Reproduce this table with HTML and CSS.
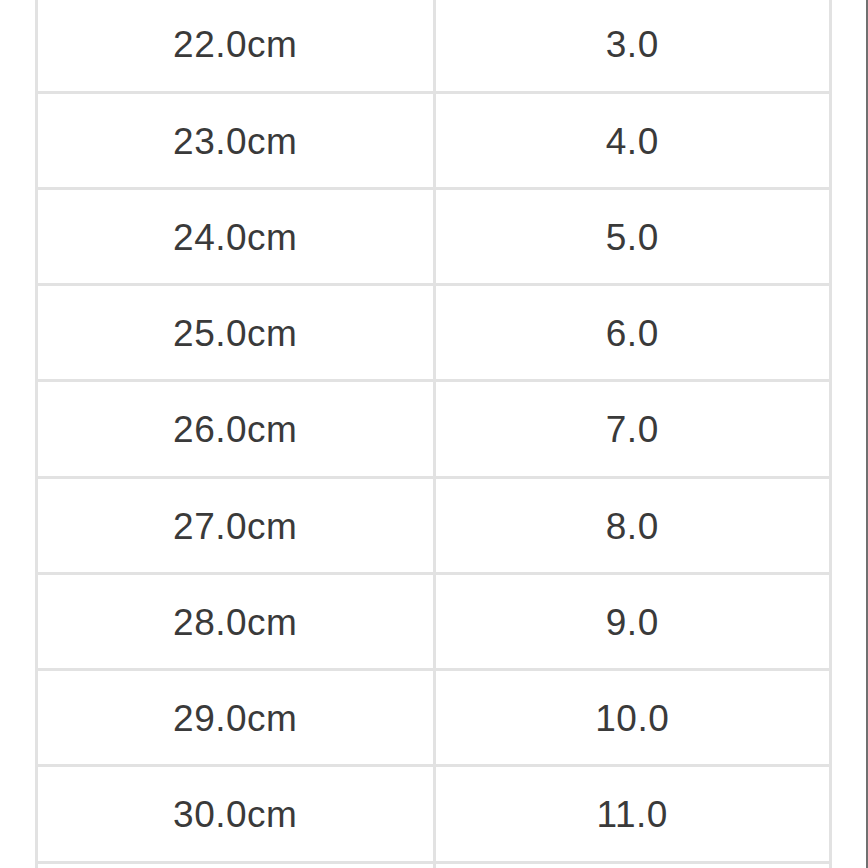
FILE: index.html
```html
<!DOCTYPE html>
<html>
<head>
<meta charset="utf-8">
<link rel="stylesheet" href="styles.css">
</head>
<body>
<div class="page">
  <div class="table">
    <div class="cell">22.0cm</div><div class="cell">3.0</div>
    <div class="cell">23.0cm</div><div class="cell">4.0</div>
    <div class="cell">24.0cm</div><div class="cell">5.0</div>
    <div class="cell">25.0cm</div><div class="cell">6.0</div>
    <div class="cell">26.0cm</div><div class="cell">7.0</div>
    <div class="cell">27.0cm</div><div class="cell">8.0</div>
    <div class="cell">28.0cm</div><div class="cell">9.0</div>
    <div class="cell">29.0cm</div><div class="cell">10.0</div>
    <div class="cell">30.0cm</div><div class="cell">11.0</div>
    <div class="cell"></div><div class="cell"></div>
  </div>
</div>
</body>
</html>
```

FILE: styles.css
```css
html, body {
  margin: 0;
  padding: 0;
  background: #fff;
  overflow: hidden;
}
.page {
  width: 866px;
  height: 868px;
  border-right: 2px solid #707070;
  overflow: hidden;
}
.table {
  margin-top: -5.75px;
  margin-left: 35px;
  width: 797px;
  box-sizing: border-box;
  display: grid;
  grid-template-columns: 394.5px 393.5px;
  grid-auto-rows: 93.25px;
  gap: 3px;
  padding: 3px;
  background: #e2e2e2;
}
.cell {
  background: #fff;
  display: flex;
  align-items: center;
  justify-content: center;
  padding-top: 3px;
  box-sizing: border-box;
  font-family: "Liberation Sans", Arial, sans-serif;
  font-size: 37px;
  color: #3a3a3a;
  letter-spacing: 0.5px;
}
```
